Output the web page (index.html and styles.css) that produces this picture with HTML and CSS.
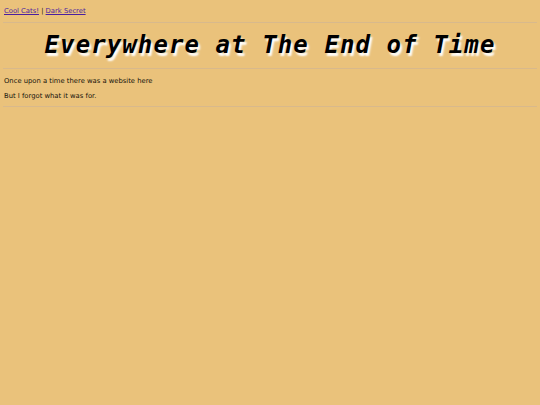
FILE: index.html
```html
<!DOCTYPE html>
<html lang="en">
<head>
    <meta charset="UTF-8">
    <meta name="viewport" content="width=device-width, initial-scale=1.0">
    <title>Everywhere at The End of Time</title>
    <link rel="stylesheet" href="styles.css">
</head>
<body>
    <!-- Top links -->
    <nav class="top-links">
        <a href="#cats">Cool Cats!</a> | <a href="#secret">Dark Secret</a>
    </nav>
    <hr>

    <h1 class="site-title">Everywhere at The End of Time</h1>
    <hr>

    <div class="story">
        <p>Once upon a time there was a website here</p>
        <p>But I forgot what it was for.</p>
    </div>
    <hr>
</body>
</html>
```

FILE: styles.css
```css
* {
    box-sizing: border-box;
}

body {
    margin: 0;
    padding: 0 3px;
    background: #eac27b;
    font-family: "DejaVu Sans", Verdana, sans-serif;
    font-size: 6.8px;
    color: #15120c;
}

.top-links {
    padding: 6px 1px 0;
    line-height: 10px;
}

.top-links a {
    color: #4a1fa0;
}

hr {
    height: 1px;
    border: none;
    background: #d8b98c;
    margin: 6px 0 0;
}

.site-title {
    margin: 0;
    padding: 7px 0 8px;
    text-align: center;
    font-family: "DejaVu Sans Mono", monospace;
    font-style: italic;
    font-weight: bold;
    font-size: 24px;
    letter-spacing: 1.1px;
    line-height: 30px;
    color: #000;
    text-shadow: 2px 3px 2px #fff;
}

.site-title + hr {
    margin-top: 0;
}

.story {
    padding: 7px 1px 0;
}

.story p {
    margin: 0 0 5px;
    line-height: 10px;
}

.story + hr {
    margin-top: 2px;
}
```
